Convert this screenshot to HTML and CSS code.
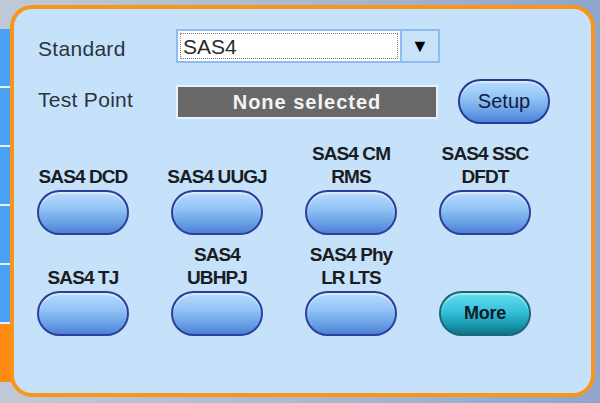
FILE: index.html
```html
<!DOCTYPE html>
<html>
<head>
<meta charset="utf-8">
<link rel="stylesheet" href="styles.css">
</head>
<body>
<div class="rail">
  <div class="tab"></div>
  <div class="tab"></div>
  <div class="tab"></div>
  <div class="tab"></div>
  <div class="tab"></div>
  <div class="tab tab-active"></div>
</div>
<div class="panel">
  <div class="form">
    <div class="row row-std">
      <div class="lbl lbl-std">Standard</div>
      <div class="select">
        <div class="select-field"><div class="focus">SAS4</div></div>
        <div class="select-btn">▼</div>
      </div>
    </div>
    <div class="row row-tp">
      <div class="lbl lbl-tp">Test Point</div>
      <div class="readout">None selected</div>
      <div class="pill setup">Setup</div>
    </div>
  </div>
  <div class="grid">
    <div class="cell"><div class="cap">SAS4 DCD</div><div class="pill"></div></div>
    <div class="cell"><div class="cap">SAS4 UUGJ</div><div class="pill"></div></div>
    <div class="cell"><div class="cap">SAS4 CM<br>RMS</div><div class="pill"></div></div>
    <div class="cell"><div class="cap">SAS4 SSC<br>DFDT</div><div class="pill"></div></div>
    <div class="cell"><div class="cap">SAS4 TJ</div><div class="pill"></div></div>
    <div class="cell"><div class="cap">SAS4<br>UBHPJ</div><div class="pill"></div></div>
    <div class="cell"><div class="cap">SAS4 Phy<br>LR LTS</div><div class="pill"></div></div>
    <div class="cell"><div class="pill more">More</div></div>
  </div>
</div>
</body>
</html>
```
FILE: styles.css
```css
html, body {
  margin: 0;
  padding: 0;
}
body {
  width: 600px;
  height: 403px;
  overflow: hidden;
  display: flex;
  align-items: flex-start;
  background: linear-gradient(to right, #c0cad6 0%, #a9b9d0 50%, #8ea6cc 100%);
  font-family: "Liberation Sans", Arial, sans-serif;
}
.rail {
  width: 11px;
  flex: none;
  padding-top: 29px;
  display: flex;
  flex-direction: column;
}
.tab {
  height: 57px;
  background: #4aa0f4;
  border-bottom: 2px solid #e6f0fc;
}
.tab-active {
  height: 58px;
  background: #ff8a12;
  border-bottom: none;
}
.panel {
  flex: none;
  margin: 5px 5px 6px -1px;
  width: 585px;
  height: 392px;
  box-sizing: border-box;
  border: 4px solid #f8961c;
  border-radius: 22px;
  background: #c6e2fa;
  padding: 20px 0 0 2px;
}
.form {
  padding-left: 22px;
}
.row {
  display: flex;
  align-items: center;
}
.row-std {
  height: 34px;
}
.row-tp {
  height: 45px;
  margin-top: 16px;
}
.lbl {
  width: 138px;
  flex: none;
  font-size: 21px;
  letter-spacing: 0.3px;
  color: #2a3440;
}
.lbl-std {
  padding-top: 6px;
}
.lbl-tp {
  padding-bottom: 4px;
}
.select {
  display: flex;
}
.select-field {
  width: 226px;
  height: 34px;
  box-sizing: border-box;
  border: 2px solid #8cbcf0;
  background: #fff;
  padding: 2px;
}
.focus {
  height: 100%;
  box-sizing: border-box;
  border: 1px dotted #7a7a7a;
  font-size: 21px;
  line-height: 25px;
  padding-left: 2px;
  color: #2a2a2a;
}
.select-btn {
  width: 38px;
  height: 34px;
  box-sizing: border-box;
  border: 2px solid #8cbcf0;
  border-left: none;
  background: #c8e2fa;
  font-size: 18px;
  line-height: 30px;
  text-align: center;
  color: #000;
}
.readout {
  width: 262px;
  height: 34px;
  box-sizing: border-box;
  border: 2px solid #e6f2fe;
  background: #686868;
  color: #f4f4f4;
  font-weight: bold;
  font-size: 20px;
  letter-spacing: 1px;
  line-height: 30px;
  text-align: center;
}
.pill {
  width: 92px;
  height: 45px;
  box-sizing: border-box;
  border-radius: 23px;
  border: 2px solid #2e3e9a;
  background: linear-gradient(to bottom, #b8dcfc 0%, #92c4f6 40%, #6aa0e6 75%, #4c82d4 100%);
  box-shadow: inset 0 2px 1px rgba(255, 255, 255, 0.45);
}
.setup {
  margin-left: 20px;
  font-size: 20px;
  line-height: 40px;
  text-align: center;
  color: #101c40;
  border-color: #2a3898;
}
.grid {
  margin-top: 18px;
  display: grid;
  grid-template-columns: repeat(4, 134px);
  row-gap: 8px;
}
.cell {
  display: flex;
  flex-direction: column;
  align-items: center;
  justify-content: flex-end;
}
.cap {
  font-weight: bold;
  font-size: 19px;
  letter-spacing: -0.9px;
  line-height: 23px;
  text-align: center;
  color: #1a1c22;
  margin-bottom: 2px;
}
.more {
  border-color: #1c6878;
  background: linear-gradient(to bottom, #66dcee 0%, #34c2da 45%, #1a9cb4 75%, #0c7488 100%);
  font-weight: bold;
  font-size: 18px;
  letter-spacing: -0.3px;
  line-height: 41px;
  text-align: center;
  color: #0e1a26;
}
```
